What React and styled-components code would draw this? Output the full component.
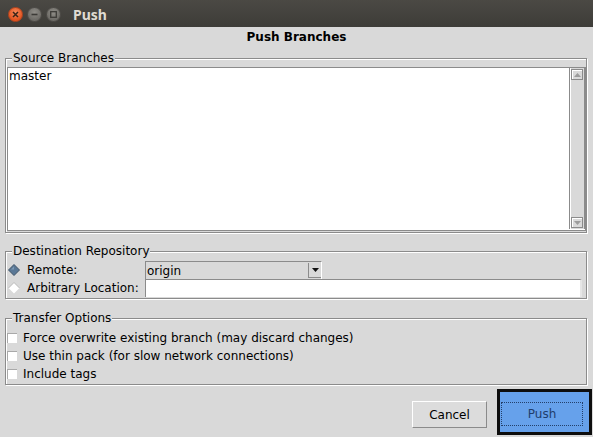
import React from "react";
import styled, { createGlobalStyle } from "styled-components";

const GlobalStyle = createGlobalStyle`
  html, body {
    margin: 0;
    padding: 0;
    background: #d9d9d9;
  }
`;

const line = "#8b8b8b";
const bg = "#d9d9d9";

let Window = styled.div`
  width: 593px;
  height: 437px;
  overflow: hidden;
  display: flex;
  flex-direction: column;
  background: ${bg};
  font-family: "DejaVu Sans", sans-serif;
  font-size: 12px;
  color: #000;
`;

let TitleBar = styled.div`
  height: 27px;
  box-sizing: border-box;
  padding: 2px 0 0 8px;
  display: flex;
  align-items: center;
  gap: 4px;
  background: linear-gradient(#4b4944, #3d3c38);
`;

let WinButton = styled.span`
  width: 15px;
  height: 15px;
  border-radius: 50%;
  box-sizing: border-box;
  display: flex;
  align-items: center;
  justify-content: center;
  border: 1px solid ${(p) => (p.$close ? "#b4451f" : "#4f4d49")};
  background: ${(p) =>
    p.$close
      ? "radial-gradient(circle at 50% 35%, #f6895a, #e2531f 70%)"
      : "radial-gradient(circle at 50% 35%, #8f8d87, #6d6b66 70%)"};
`;

let TitleText = styled.span`
  margin-left: 8px;
  font-family: "Noto Sans", "DejaVu Sans", sans-serif;
  font-weight: 700;
  font-size: 14px;
  color: #dfdbd2;
`;

let Heading = styled.div`
  padding-top: 3px;
  line-height: 15px;
  text-align: center;
  font-weight: 700;
`;

let Group = styled.div`
  margin: ${(p) => p.$top}px 6px 0 5px;
  padding-bottom: 1px;
  display: flex;
  flex-direction: column;
  border: 1px solid ${line};
  box-shadow: inset 1px 1px 0 #fff, 1px 1px 0 #fff;
`;

let Legend = styled.div`
  align-self: flex-start;
  margin: -8px 0 0 6px;
  padding: 0 1px;
  line-height: 14px;
  background: ${bg};
`;

let List = styled.div`
  margin: 2px 0 0 1px;
  height: 164px;
  box-sizing: border-box;
  display: flex;
  background: #fff;
  border: 1px solid ${line};
`;

let ListItems = styled.div`
  flex: 1;
  padding: 1px 1px 0;
  line-height: 15px;
`;

let Scrollbar = styled.div`
  width: 16px;
  margin-bottom: 1px;
  box-sizing: border-box;
  display: flex;
  flex-direction: column;
  justify-content: space-between;
  border-left: 1px solid ${line};
  border-right: 1px solid ${line};
  background: ${bg};
  box-shadow: inset 1px 0 0 #fff;
`;

let ScrollButton = styled.div`
  height: 11px;
  margin: 1px;
  box-sizing: border-box;
  display: flex;
  align-items: center;
  justify-content: center;
  border: 1px solid ${line};
  box-shadow: inset 1px 1px 0 #fff;
`;

let Row = styled.div`
  height: 18px;
  display: flex;
  align-items: center;
  margin-top: ${(p) => p.$top || 0}px;
`;

let OptionCell = styled.label`
  width: 139px;
  height: 100%;
  box-sizing: border-box;
  padding-left: 2px;
  display: flex;
  align-items: center;
  gap: 7px;
`;

let Combo = styled.div`
  width: 177px;
  height: 18px;
  box-sizing: border-box;
  display: flex;
  align-items: center;
  border-top: 1px solid ${line};
  border-left: 1px solid ${line};
  border-right: 1px solid #fff;
  background: ${bg};
`;

let ComboText = styled.span`
  flex: 1;
  padding-left: 1px;
`;

let ComboArrow = styled.span`
  width: 13px;
  height: 15px;
  box-sizing: border-box;
  display: flex;
  align-items: center;
  justify-content: center;
  border-left: 1px solid ${line};
  border-bottom: 1px solid ${line};
`;

let Field = styled.div`
  width: 437px;
  height: 18px;
  box-sizing: border-box;
  background: #fff;
  border-top: 1px solid ${line};
  border-left: 1px solid ${line};
  border-right: 2px solid #e6e6e6;
`;

let CheckRow = styled.label`
  height: 18px;
  display: flex;
  align-items: center;
  gap: 6px;
  margin-top: ${(p) => p.$top || 0}px;
`;

let CheckBox = styled.span`
  width: 10px;
  height: 10px;
  margin-left: 1px;
  box-sizing: border-box;
  background: #fff;
  border-top: 1px solid #a9a9a9;
  border-left: 1px solid #a9a9a9;
`;

let ButtonRow = styled.div`
  margin: 4px 1px 0 0;
  display: flex;
  justify-content: flex-end;
  align-items: flex-start;
  gap: 10px;
`;

let CancelButton = styled.button`
  width: 75px;
  height: 27px;
  margin-top: 12px;
  padding: 0;
  font: inherit;
  color: #000;
  background: #dcdcdc;
  border: 1px solid;
  border-color: #fff ${line} ${line} #fff;
`;

let PushFrame = styled.div`
  width: 95px;
  height: 46px;
  box-sizing: border-box;
  padding: 10px 6px 6px 1px;
  border: 3px solid #0e0e0e;
  background: #66a1eb;
`;

let PushButton = styled.button`
  width: 82px;
  height: 24px;
  padding: 0 0 1px;
  font: inherit;
  color: #1f3d6c;
  background: transparent;
  border: 1px dotted #23406b;
`;

function Glyph({ kind }) {
  if (kind === "close") {
    return (
      <svg width="9" height="9" viewBox="0 0 9 9">
        <path d="M2 2 L7 7 M7 2 L2 7" stroke="#3a2418" strokeWidth="1.5" />
      </svg>
    );
  }
  if (kind === "min") {
    return (
      <svg width="9" height="9" viewBox="0 0 9 9">
        <rect x="1.5" y="3.7" width="6" height="1.6" fill="#3c3b37" />
      </svg>
    );
  }
  return (
    <svg width="9" height="9" viewBox="0 0 9 9">
      <rect x="1.7" y="1.7" width="5.6" height="5.6" fill="none" stroke="#3c3b37" strokeWidth="1.3" />
    </svg>
  );
}

function Radio({ on }) {
  return (
    <svg width="12" height="12" viewBox="0 0 12 12">
      {on ? (
        <>
          <polygon points="6,0.5 11.5,6 6,11.5 0.5,6" fill="#5a7896" stroke="#3e5267" strokeWidth="1" />
          <polygon points="6,2.5 3,5.5 6,5.5" fill="#7e9ab6" />
        </>
      ) : (
        <>
          <polygon points="6,0.5 11.5,6 6,11.5 0.5,6" fill="#fff" />
          <polyline points="0.5,6 6,0.5 11.5,6" fill="none" stroke="#b9b9b9" strokeWidth="1" />
        </>
      )}
    </svg>
  );
}

function Arrow({ up, color }) {
  return (
    <svg width="7" height="4" viewBox="0 0 7 4">
      <polygon points={up ? "3.5,0 7,4 0,4" : "0,0 7,0 3.5,4"} fill={color} />
    </svg>
  );
}

export default function App() {
  return (
    <Window>
      <GlobalStyle />
      <TitleBar>
        <WinButton $close>
          <Glyph kind="close" />
        </WinButton>
        <WinButton>
          <Glyph kind="min" />
        </WinButton>
        <WinButton>
          <Glyph kind="max" />
        </WinButton>
        <TitleText>Push</TitleText>
      </TitleBar>

      <Heading>Push Branches</Heading>

      <Group $top={13}>
        <Legend>Source Branches</Legend>
        <List>
          <ListItems>master</ListItems>
          <Scrollbar>
            <ScrollButton>
              <Arrow up color="#9c9c9c" />
            </ScrollButton>
            <ScrollButton>
              <Arrow color="#9c9c9c" />
            </ScrollButton>
          </Scrollbar>
        </List>
      </Group>

      <Group $top={18}>
        <Legend>Destination Repository</Legend>
        <Row $top={3}>
          <OptionCell>
            <Radio on />
            Remote:
          </OptionCell>
          <Combo>
            <ComboText>origin</ComboText>
            <ComboArrow>
              <Arrow color="#111" />
            </ComboArrow>
          </Combo>
        </Row>
        <Row>
          <OptionCell>
            <Radio />
            Arbitrary Location:
          </OptionCell>
          <Field />
        </Row>
      </Group>

      <Group $top={19}>
        <Legend>Transfer Options</Legend>
        <CheckRow $top={4}>
          <CheckBox />
          Force overwrite existing branch (may discard changes)
        </CheckRow>
        <CheckRow>
          <CheckBox />
          Use thin pack (for slow network connections)
        </CheckRow>
        <CheckRow>
          <CheckBox />
          Include tags
        </CheckRow>
      </Group>

      <ButtonRow>
        <CancelButton>Cancel</CancelButton>
        <PushFrame>
          <PushButton>Push</PushButton>
        </PushFrame>
      </ButtonRow>
    </Window>
  );
}
